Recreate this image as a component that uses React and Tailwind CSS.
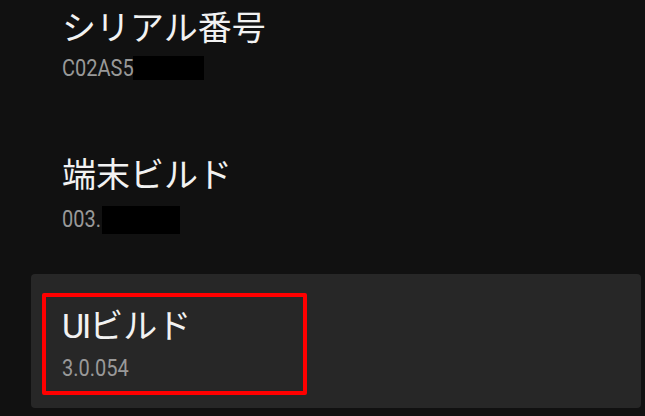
import React from 'react';

const items = [
  { title: 'シリアル番号', value: 'C02AS5', valueWidth: 'w-[71px]', mask: 'w-[71px] h-[24px] -mt-[2px]' },
  { title: '端末ビルド', value: '003.', valueWidth: 'w-[40px]', mask: 'w-[78px] h-[28px]' },
];

const Value = ({ children, className = '' }) => (
  <span className={`inline-block whitespace-nowrap origin-left scale-x-[0.87] ${className}`}>{children}</span>
);

const SettingRow = ({ title, value, valueWidth, mask, className = '' }) => (
  <div className={`ml-[31px] w-[610px] pl-[31px] ${className}`}>
    <div className="text-[34px] leading-[40px] text-[#f2f2f2]">{title}</div>
    <div className="mt-[11px] flex items-center text-[23px] leading-[24px] text-[#999999]">
      <Value className={valueWidth}>{value}</Value>
      {mask && <span className={`inline-block bg-black ${mask}`} />}
    </div>
  </div>
);

export default function App() {
  return (
    <div className="w-[645px] h-[416px] overflow-hidden bg-[#111111] font-['Roboto','Noto_Sans_CJK_JP',sans-serif]">
      <SettingRow {...items[0]} className="pt-[8px] [&>div:nth-child(2)]:mt-[9px]" />
      <SettingRow {...items[1]} className="mt-[74px]" />

      {/* focused row */}
      <div className="relative ml-[31px] mt-[40px] w-[610px] rounded-[4px] bg-[#272727] pl-[31px] pt-[32px] pb-[27px]">
        <div className="text-[34px] leading-[40px] text-[#f2f2f2]">
          <span className="tracking-[-2px]">UI</span>ビルド
        </div>
        <div className="mt-[11px] text-[23px] leading-[24px] text-[#999999]">
          <Value>3.0.054</Value>
        </div>
        <div className="absolute left-[11px] top-[19px] h-[102px] w-[265px] rounded-[2px] border-4 border-[#ff0000]" />
      </div>
    </div>
  );
}
